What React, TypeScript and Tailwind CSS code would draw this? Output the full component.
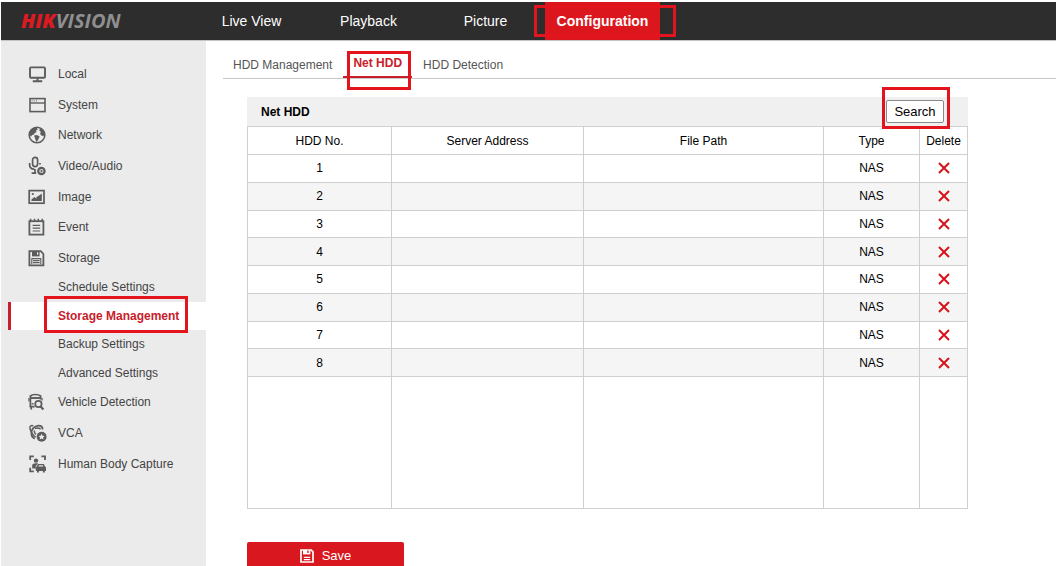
import {useState} from "react";
import type {ReactNode} from "react";

type MenuItem = {
    label: string;
    icon: ReactNode;
};

const MonitorIcon = () => (
    <svg className="size-[18px]" viewBox="0 0 18 18" fill="none" stroke="currentColor" strokeWidth="1.9" aria-hidden="true">
        <rect x="2" y="2.4" width="15" height="10.4" rx="1"/>
        <path d="M9.5 12.500v3.500M4.800 16.300h9.400"/>
    </svg>
);

const WindowIcon = () => (
    <svg className="size-[18px]" viewBox="0 0 18 18" fill="none" stroke="currentColor" strokeWidth="1.6" aria-hidden="true">
        <rect x="2" y="2.6" width="15" height="13"/>
        <path d="M2 7h15" strokeWidth="1.4"/>
        <path d="M3.6 4.9h1M5.8 4.9h1M8 4.9h1" strokeWidth="1"/>
    </svg>
);

const GlobeIcon = () => (
    <svg className="size-[18px]" viewBox="0 0 18 18" fill="currentColor" aria-hidden="true">
        <circle cx="9" cy="9" r="7.8" fill="none" stroke="currentColor" strokeWidth="1.6"/>
        <path d="M1.400 8C2 4 5 1.600 8.600 1.300L9.800 3.400 8 4.600l.6 1.500-2 .8-.5 1.600-2 .5-.8 1.400L1.500 9z"/>
        <path d="M6 9.6l3-.6 2.8 1.8-1.2 1.7-.4 1.6-1.8 1.800-1-2.600z"/>
        <path d="M11.800 2l3.800 2.600 1.400 4-1.800 1.400-2-.6-1.200-2 1-1.400-1.600-1.200z"/>
    </svg>
);

const MicIcon = () => (
    <svg className="size-[18px] overflow-visible" viewBox="0 0 18 18" fill="none" stroke="currentColor" strokeWidth="1.7" aria-hidden="true">
        <rect x="4.6" y="0.4" width="5" height="9.2" rx="2.5"/>
        <path d="M1.6 6v1.4c0 2.6 1.8 4.6 4.6 4.8M7 12v4M3.6 16.2h4.6M12 6v1.6"/>
        <circle cx="13.4" cy="14" r="3.200" strokeWidth="2.200"/>
        <path d="M12.6 12.3l2.4 1.7-2.4 1.7z" fill="currentColor" stroke="none"/>
    </svg>
);

const ImageIcon = () => (
    <svg className="size-[18px]" viewBox="0 0 18 18" fill="none" stroke="currentColor" strokeWidth="1.7" aria-hidden="true">
        <rect x="1.200" y="2.600" width="14.800" height="12.600"/>
        <circle cx="4.8" cy="6" r="1.1" fill="currentColor" stroke="none"/>
        <path d="M3.400 13v-1.600L6.400 9l2 1.800V9l1.600-.8L13.800 5.600V13z" fill="currentColor" stroke="none"/>
    </svg>
);

const NotepadIcon = () => (
    <svg className="size-[18px]" viewBox="0 0 18 18" fill="none" stroke="currentColor" strokeWidth="1.8" aria-hidden="true">
        <rect x="1.400" y="3.200" width="14" height="13.400"/>
        <path d="M2.600.800v3M6.500.800v3M10.300.800v3M14.200.800v3" strokeWidth="1.5"/>
        <path d="M4.6 7.4h7.6M4.6 10.2h7.6M4.6 13h7.6" strokeWidth="1.2"/>
    </svg>
);

const FloppyIcon = () => (
    <svg className="size-[18px]" viewBox="0 0 18 18" fill="none" stroke="currentColor" strokeWidth="1.8" aria-hidden="true">
        <path d="M1.400 2.200h11.400L15.400 5v11.400H1.400z"/>
        <path d="M4 2.400h7.600v5H4z" fill="currentColor" stroke="none"/>
        <path d="M9.6 3.2v2.6" stroke="#ebebeb" strokeWidth="1.2"/>
        <path d="M3.8 9.6h9M3.8 9.2v6M12.8 9.2v6M5 11.6h6.6M5 13.6h6.6" strokeWidth="1.1"/>
    </svg>
);

const VehicleIcon = () => (
    <svg className="size-[18px]" viewBox="0 0 18 18" fill="none" stroke="currentColor" strokeWidth="1.7" aria-hidden="true">
        <path d="M2.400 13.600V3C4.600 1 10.200 1 12.600 3v3.600"/>
        <path d="M2.400 5h10.200" strokeWidth="1.900"/>
        <path d="M1.600 13.600h5M3.200 13.600v2.800" strokeWidth="1.800"/>
        <path d="M1 5v3.400M14 5v2.400" strokeWidth="1.300"/>
        <path d="M3.600 10.800h2" strokeWidth="1.400"/>
        <circle cx="10.400" cy="11" r="3.200"/>
        <path d="M12.600 13.400l2.800 3" strokeWidth="2.200"/>
    </svg>
);

const VcaIcon = () => (
    <svg className="size-[18px] overflow-visible" viewBox="0 0 18 18" fill="none" stroke="currentColor" strokeWidth="1.8" aria-hidden="true">
        <path d="M14.600 5.400C14.600 3 13 1.400 10.400 1.600 6.200 2 3.200 5.400 3.400 9.400c.1 2.600 1.200 4.400 3.400 5.200"/>
        <path d="M5.400 1.800C3.400.800 1.400 2 2 4.600c.6 2.800 2.600 6 5.600 8.600M7 4.600c1.800-.8 4-.6 5.600.4M6.200 6.400c0 1.800.8 3.200 1.800 4" strokeWidth="1.500"/>
        <circle cx="13.600" cy="12.800" r="5" fill="currentColor" stroke="none"/>
        <path d="M13.600 9.800l.9 1.900 2.100.3-1.500 1.500.4 2.100-1.900-1-1.900 1 .4-2.100-1.500-1.500 2.100-.3z" fill="#ebebeb" stroke="none"/>
    </svg>
);

const BodyCaptureIcon = () => (
    <svg className="size-[18px]" viewBox="0 0 18 18" fill="currentColor" aria-hidden="true">
        <path d="M2.200 5V1.400h3.600M13.400 1.400H17V5M2.200 12.800v3.600h3.600" fill="none" stroke="currentColor" strokeWidth="1.800"/>
        <circle cx="8" cy="5.600" r="2.200"/>
        <path d="M4.200 13.600V10.600c0-1.600 1.400-2.400 3.800-2.400.8 0 1.600.2 2.200.4L7.800 11v2.600z"/>
        <path d="M10 9h5.800l1.300 2.600.9.900v3.500h-1.200v1.600h-2V16h-3.800v1.600H9V16H7.800v-3.500l.9-.9z"/>
        <path d="M10.400 11.600l.6-1.300h3.800l.6 1.300z" fill="#ebebeb"/>
    </svg>
);

const CrossIcon = () => (
    <svg className="size-3" viewBox="0 0 12 12" fill="none" stroke="currentColor" strokeWidth="2" aria-hidden="true">
        <path d="M1 1l10 10M11 1L1 11"/>
    </svg>
);

const SaveIcon = () => (
    <svg className="size-[14px]" viewBox="0 0 14 14" fill="none" stroke="currentColor" strokeWidth="1.7" aria-hidden="true">
        <path d="M1 1h10.200L13 2.800V13H1z"/>
        <path d="M3 1h7.400v4.400H3z" fill="currentColor" stroke="none"/>
        <path d="M8 1.600v2.400" stroke="#d9171e" strokeWidth="1.400"/>
        <path d="M3.800 8.400h6.400M3.800 10.600h6.400" strokeWidth="1.200"/>
    </svg>
);

const navItems = ["Live View", "Playback", "Picture", "Configuration"];

const topMenu: MenuItem[] = [
    {label: "Local", icon: <MonitorIcon/>},
    {label: "System", icon: <WindowIcon/>},
    {label: "Network", icon: <GlobeIcon/>},
    {label: "Video/Audio", icon: <MicIcon/>},
    {label: "Image", icon: <ImageIcon/>},
    {label: "Event", icon: <NotepadIcon/>},
    {label: "Storage", icon: <FloppyIcon/>},
];

const storageMenu = ["Schedule Settings", "Storage Management", "Backup Settings", "Advanced Settings"];

const bottomMenu: MenuItem[] = [
    {label: "Vehicle Detection", icon: <VehicleIcon/>},
    {label: "VCA", icon: <VcaIcon/>},
    {label: "Human Body Capture", icon: <BodyCaptureIcon/>},
];

const tabs = ["HDD Management", "Net HDD", "HDD Detection"];

const disks = [1, 2, 3, 4, 5, 6, 7, 8].map((no) => ({no, address: "", path: "", type: "NAS"}));

const MenuLink = ({label, icon}: MenuItem) => (
    <li className="flex flex-1">
        <a href="#" className="flex flex-1 items-center gap-3 pl-[27px]">
            <span className="text-[#5c5c5c]">{icon}</span>
            {label}
        </a>
    </li>
);

const Header = () => (
    <header className="flex h-[39px] shrink-0 border-b border-[#c4c4c4] bg-[#2d2d2d] text-white">
        <div className="flex w-[193px] items-center pl-5 font-['Open_Sans',sans-serif] text-[20px] leading-none italic">
            <span className="font-extrabold text-[#dc1a22]">HIK</span>
            <span className="font-bold text-[#8f8f8f]">VISION</span>
        </div>
        <nav className="flex gap-[2px] text-sm">
            {navItems.map((item) =>
                item === "Configuration" ? (
                    <a key={item} href="#" className="relative flex w-[115px] items-center justify-center bg-[#dc161d] font-bold">
                        {item}
                        <span className="absolute top-[3px] -right-4 bottom-[3px] -left-[11px] border-3 border-[#e3141e]"/>
                    </a>
                ) : (
                    <a key={item} href="#" className="flex w-[115px] items-center justify-center">
                        {item}
                    </a>
                )
            )}
        </nav>
    </header>
);

const Sidebar = () => (
    <aside className="w-[205px] shrink-0 bg-[#ebebeb] pt-[18px] text-[#444]">
        <ul className="flex h-[214px] flex-col">
            {topMenu.map((item) => <MenuLink key={item.label} {...item}/>)}
        </ul>
        <ul className="flex h-[114px] flex-col">
            {storageMenu.map((label) =>
                label === "Storage Management" ? (
                    <li key={label} className="relative ml-[7px] flex flex-1 border-l-3 border-[#c8202b] bg-white">
                        <a href="#" className="flex flex-1 items-center pl-[47px] font-bold text-[#c8202b]">{label}</a>
                        <span className="absolute -top-[6px] right-[18px] -bottom-[3px] left-[33px] border-3 border-[#e3141e]"/>
                    </li>
                ) : (
                    <li key={label} className="flex flex-1">
                        <a href="#" className="flex flex-1 items-center pl-[57px]">{label}</a>
                    </li>
                )
            )}
        </ul>
        <ul className="flex h-[92px] flex-col">
            {bottomMenu.map((item) => <MenuLink key={item.label} {...item}/>)}
        </ul>
    </aside>
);

const TabBar = () => (
    <nav className="flex h-[38px] gap-px border-b border-[#c8c8c8] text-[#555]">
        {tabs.map((tab) =>
            tab === "Net HDD" ? (
                <a key={tab} href="#" className="relative flex items-center border-b-2 border-[#c8202b] px-[10px] pt-[9px] font-bold text-[#c8202b]">
                    {tab}
                    <span className="absolute top-[10px] right-px -bottom-[14px] left-1 border-3 border-[#e3141e]"/>
                </a>
            ) : (
                <a key={tab} href="#" className="flex items-center px-[10px] pt-[11px]">{tab}</a>
            )
        )}
    </nav>
);

const cell = "border border-[#cfcfcf] p-0 text-center font-normal";

const NetHddTable = () => {
    const [rows, setRows] = useState(disks);

    return (
        <section className="max-w-[721px]">
            <div className="flex h-[29px] items-center justify-between bg-[#f0f0f0] pr-6 pl-[14px]">
                <h2 className="font-bold">Net HDD</h2>
                <div className="relative">
                    <button type="button" className="block h-[23px] w-[58px] rounded-xs border border-[#8a8a8a] bg-white text-[13px]">
                        Search
                    </button>
                    <span className="pointer-events-none absolute -top-[13px] -right-[6px] -bottom-[6px] -left-1 border-3 border-[#e3141e]"/>
                </div>
            </div>
            <table className="h-[383px] w-full table-fixed border-collapse">
                <colgroup>
                    <col className="w-[144px]"/>
                    <col className="w-[192px]"/>
                    <col/>
                    <col className="w-[96px]"/>
                    <col className="w-[48px]"/>
                </colgroup>
                <thead>
                    <tr className="h-7">
                        <th className={cell}>HDD No.</th>
                        <th className={cell}>Server Address</th>
                        <th className={cell}>File Path</th>
                        <th className={cell}>Type</th>
                        <th className={cell}>Delete</th>
                    </tr>
                </thead>
                <tbody>
                    {rows.map((row) => (
                        <tr key={row.no} className="even:bg-[#f5f5f5]">
                            <td className={cell}>{row.no}</td>
                            <td className={cell}>{row.address}</td>
                            <td className={cell}>{row.path}</td>
                            <td className={cell}>{row.type}</td>
                            <td className={cell}>
                                <button
                                    type="button"
                                    aria-label={`Delete HDD ${row.no}`}
                                    className="mx-auto block text-[#d8121b]"
                                    onClick={() => setRows(rows.filter((r) => r.no !== row.no))}
                                >
                                    <CrossIcon/>
                                </button>
                            </td>
                        </tr>
                    ))}
                    {/* blank area below the last disk */}
                    <tr className="h-[132px]">
                        <td className={cell}/>
                        <td className={cell}/>
                        <td className={cell}/>
                        <td className={cell}/>
                        <td className={cell}/>
                    </tr>
                </tbody>
            </table>
        </section>
    );
};

const App = () => {
    return (
        <div className="flex h-screen flex-col overflow-hidden bg-white pt-[2px] pl-px font-['Liberation_Sans',Arial,sans-serif] text-xs text-black">
            <Header/>
            <div className="flex min-h-0 flex-1">
                <Sidebar/>
                <main className="min-w-0 flex-1 pl-[17px]">
                    <TabBar/>
                    <div className="pt-[18px] pl-6">
                        <NetHddTable/>
                        <button type="button" className="mt-[33px] flex h-7 w-[157px] items-center justify-center gap-2 rounded-xs bg-[#d9171e] text-[13px] text-white">
                            <SaveIcon/>
                            Save
                        </button>
                    </div>
                </main>
            </div>
        </div>
    );
};

export default App;
